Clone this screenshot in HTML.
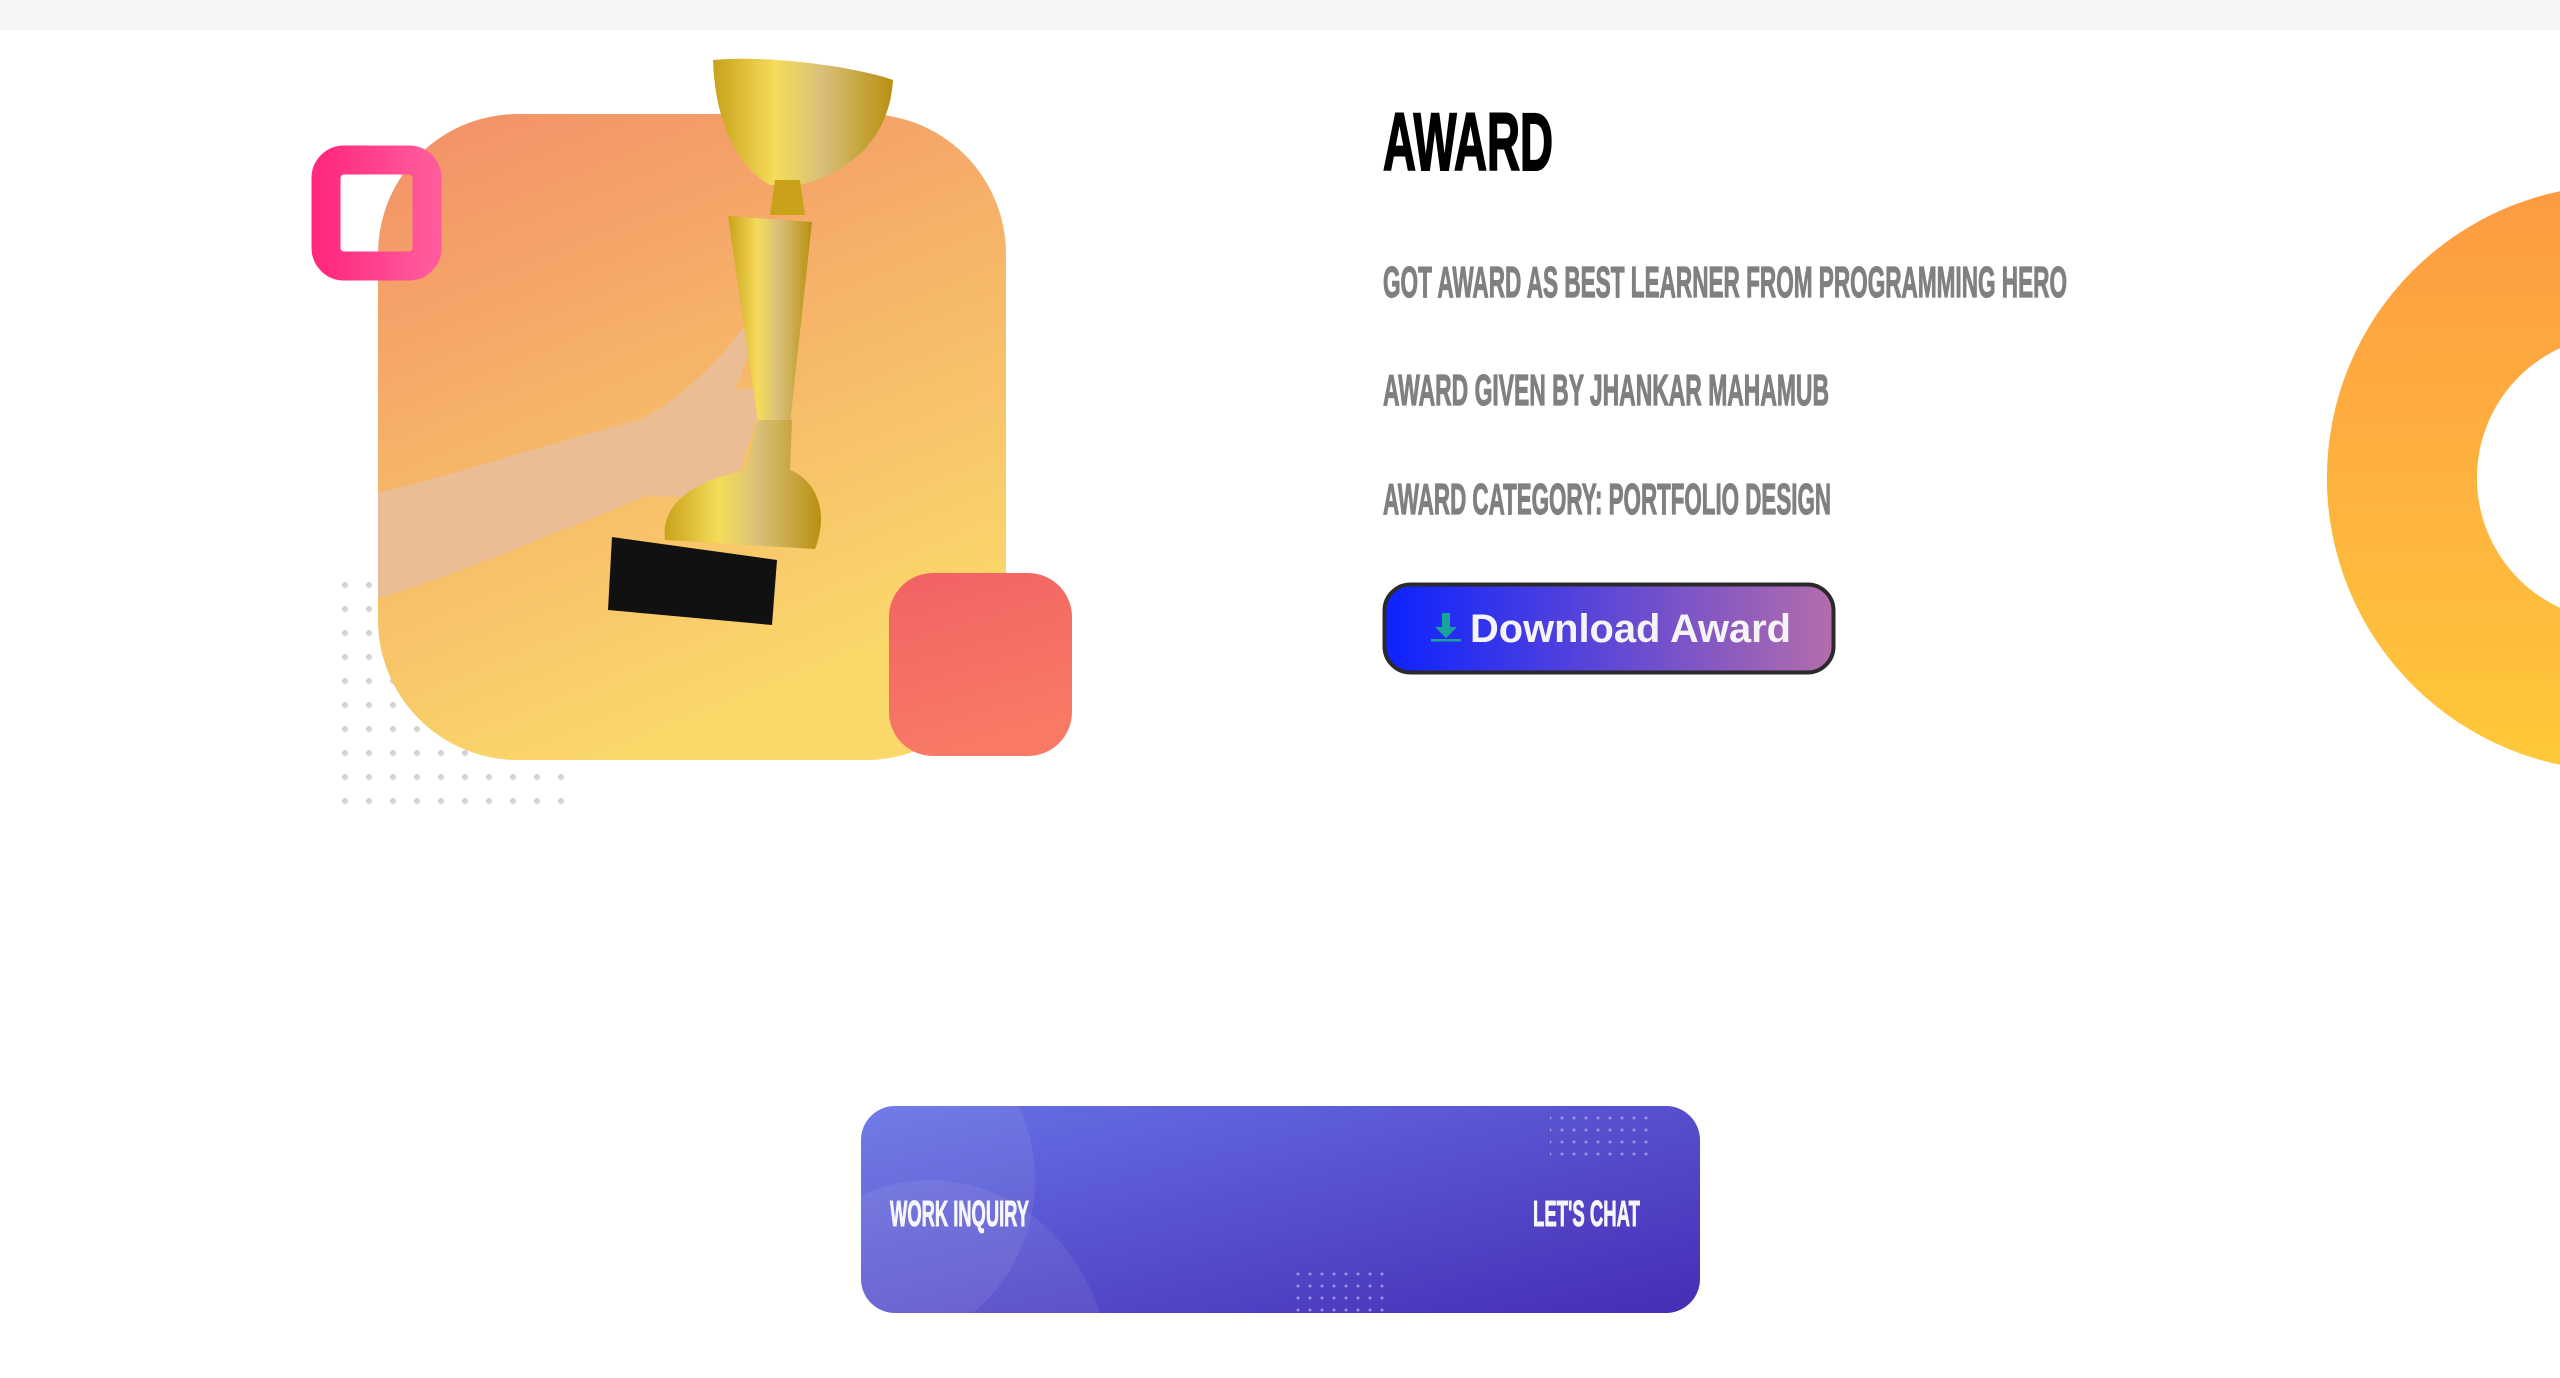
<!DOCTYPE html>
<html><head><meta charset="utf-8">
<style>
html,body{margin:0;padding:0;background:#fff;width:2560px;height:1378px;overflow:hidden;position:relative;font-family:"Liberation Sans",sans-serif}
.abs{position:absolute}
svg{display:block}
</style></head><body>
<div class="abs" style="left:0;top:0;width:2560px;height:30px;background:#f6f6f6"></div>

<svg class="abs" style="left:0;top:0" width="2560" height="1378" viewBox="0 0 2560 1378">
<defs>
<linearGradient id="og" x1="0" y1="0" x2="0.4" y2="1"><stop offset="0" stop-color="#f28f68"/><stop offset="1" stop-color="#fad96a"/></linearGradient>
<linearGradient id="pk" x1="0" y1="0" x2="1" y2="0"><stop offset="0" stop-color="#ff2a7f"/><stop offset="1" stop-color="#ff5a9c"/></linearGradient>
<linearGradient id="rd" x1="0" y1="0" x2="0.3" y2="1"><stop offset="0" stop-color="#f26163"/><stop offset="1" stop-color="#f87a66"/></linearGradient>
<linearGradient id="ring" x1="0" y1="0" x2="0" y2="1"><stop offset="0" stop-color="#fd9a42"/><stop offset="1" stop-color="#ffc93a"/></linearGradient>
<linearGradient id="btn" x1="0" y1="0" x2="1" y2="0"><stop offset="0" stop-color="#0c22ff"/><stop offset="1" stop-color="#b36dab"/></linearGradient>
<linearGradient id="ban" x1="0" y1="0" x2="1" y2="1"><stop offset="0" stop-color="#6772e6"/><stop offset="1" stop-color="#452db4"/></linearGradient>
<linearGradient id="gold" x1="0" y1="0" x2="1" y2="0"><stop offset="0" stop-color="#c9a21a"/><stop offset="0.35" stop-color="#f5dc5a"/><stop offset="0.6" stop-color="#d9c07a"/><stop offset="1" stop-color="#b8900f"/></linearGradient>
<pattern id="dots" x="342" y="582" width="24" height="24" patternUnits="userSpaceOnUse"><circle cx="3" cy="3" r="3" fill="#d2d2d2"/></pattern>
<pattern id="wd" x="0" y="0" width="12" height="12" patternUnits="userSpaceOnUse"><circle cx="2" cy="2" r="1.5" fill="#9b93e6"/></pattern>
<clipPath id="banclip"><rect x="861" y="1106" width="839" height="207" rx="34"/></clipPath>
</defs>

<rect x="338" y="578" width="230" height="242" fill="url(#dots)"/>
<rect x="378" y="114" width="628" height="646" rx="140" fill="url(#og)"/>
<rect x="326" y="160" width="101" height="106" rx="18" fill="none" stroke="url(#pk)" stroke-width="29"/>
<rect x="889" y="573" width="183" height="183" rx="44" fill="url(#rd)"/>

<!-- arm -->
<path d="M378 493 C470 470 560 440 640 420 C680 400 720 360 745 325 C755 318 760 330 752 345 L735 390 C760 385 770 395 760 410 L740 470 C710 495 690 500 650 495 C560 530 470 570 378 598 Z" fill="#ebbd94"/>
<!-- trophy -->
<path d="M713 60 C760 55 850 65 893 80 C890 130 860 170 800 185 L770 185 C735 165 715 120 713 60 Z" fill="url(#gold)"/>
<path d="M775 180 L800 180 L805 215 L770 215 Z" fill="#c9a21a"/>
<path d="M728 216 L812 222 L790 423 L758 423 Z" fill="url(#gold)"/>
<path d="M758 420 L792 420 L790 470 C815 480 830 510 815 549 L665 540 C660 500 700 480 745 470 Z" fill="url(#gold)"/>
<path d="M612 537 L777 560 L772 625 L608 610 Z" fill="#111"/>

<path fill-rule="evenodd" fill="url(#ring)" d="M2620 185 A293 293 0 1 0 2620 771 A293 293 0 1 0 2620 185 Z M2620 335 A143 143 0 1 1 2620 621 A143 143 0 1 1 2620 335 Z"/>

<g font-family="Liberation Sans" font-weight="bold">
<text x="1383" y="170" font-size="82" textLength="170" lengthAdjust="spacingAndGlyphs" fill="#000" stroke="#000" stroke-width="2">AWARD</text>
<text x="1383" y="297" font-size="44" textLength="684" lengthAdjust="spacingAndGlyphs" fill="#808080" stroke="#808080" stroke-width="1.2">GOT AWARD AS BEST LEARNER FROM PROGRAMMING HERO</text>
<text x="1383" y="405" font-size="44" textLength="446" lengthAdjust="spacingAndGlyphs" fill="#808080" stroke="#808080" stroke-width="1.2">AWARD GIVEN BY JHANKAR MAHAMUB</text>
<text x="1383" y="514" font-size="44" textLength="448" lengthAdjust="spacingAndGlyphs" fill="#808080" stroke="#808080" stroke-width="1.2">AWARD CATEGORY: PORTFOLIO DESIGN</text>
</g>

<rect x="1384.5" y="584.5" width="449" height="88" rx="26" fill="url(#btn)" stroke="#2a2a2a" stroke-width="4"/>
<path d="M1442 613 L1450 613 L1450 627 L1457 627 L1446 638 L1435 627 L1442 627 Z" fill="#17a59a"/>
<rect x="1431" y="639" width="30" height="2.5" fill="#17a59a"/>
<text x="1470" y="642" font-family="Liberation Sans" font-weight="bold" font-size="40" textLength="321" lengthAdjust="spacingAndGlyphs" fill="#f4f4f6">Download Award</text>

<g clip-path="url(#banclip)">
<rect x="861" y="1106" width="839" height="207" fill="url(#ban)"/>
<ellipse cx="870" cy="1180" rx="165" ry="170" fill="#fff" opacity="0.07"/>
<ellipse cx="930" cy="1380" rx="180" ry="200" fill="#fff" opacity="0.07"/>
<rect x="1550" y="1110" width="100" height="52" fill="url(#wd)"/>
<rect x="1292" y="1268" width="100" height="45" fill="url(#wd)"/>
</g>
<g font-family="Liberation Sans" font-weight="bold" fill="#f6f6f8" stroke="#f6f6f8" stroke-width="1">
<text x="890" y="1226" font-size="36" textLength="139" lengthAdjust="spacingAndGlyphs">WORK INQUIRY</text>
<text x="1533" y="1226" font-size="36" textLength="107" lengthAdjust="spacingAndGlyphs">LET'S CHAT</text>
</g>
</svg>
</body></html>
